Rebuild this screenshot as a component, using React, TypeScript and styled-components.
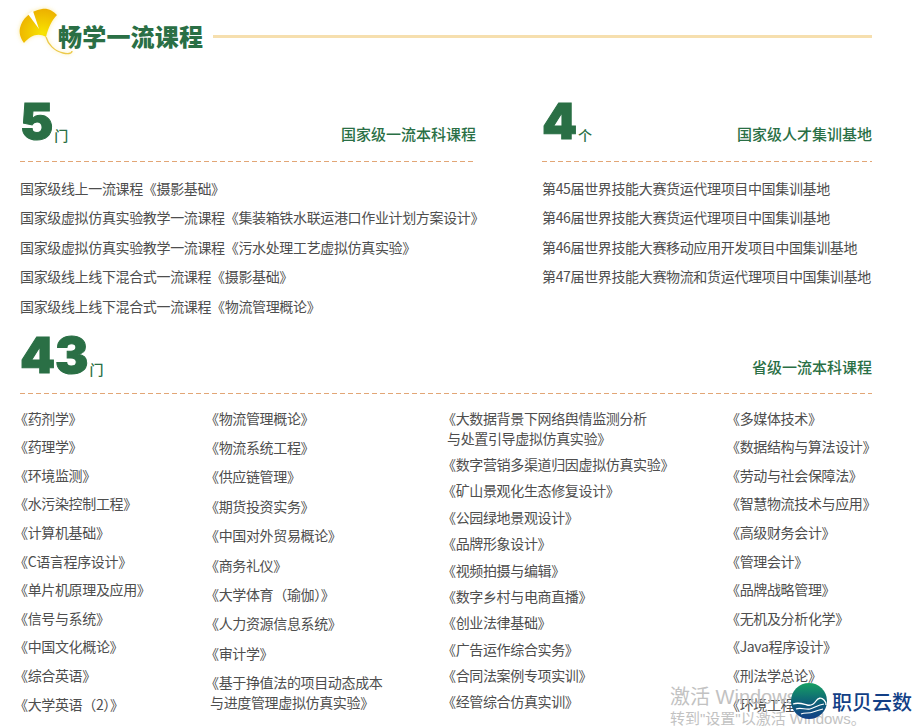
import React from "react";
import styled, { createGlobalStyle } from "styled-components";

const GlobalStyle = createGlobalStyle`
  html, body {
    margin: 0;
    background: #fff;
  }
`;

const FONT = `"Noto Sans CJK SC", "Liberation Sans", sans-serif`;
const GREEN = "#2a6f45";

const Page = styled.div`
  position: relative;
  width: 919px;
  height: 726px;
  overflow: hidden;
  padding: 12px 47px 0 20px;
  box-sizing: border-box;
  font-family: ${FONT};
  color: #4e4e4e;
`;

const Banner = styled.div`
  display: flex;
  align-items: center;
  height: 48px;
`;

const Leaf = styled.svg`
  flex: none;
  align-self: flex-start;
  width: 52px;
  height: 48px;
  margin: -4px -14px 0 0;
  overflow: visible;
  filter: drop-shadow(0 0 2px rgba(250, 225, 120, 0.7));
`;

const BannerTitle = styled.h1`
  position: relative;
  margin: 0;
  font-size: 24px;
  line-height: 48px;
  font-weight: 900;
  letter-spacing: 0.2px;
  color: ${GREEN};
  white-space: nowrap;
`;

const BannerRule = styled.div`
  flex: 1;
  height: 3px;
  margin-left: 10px;
  background: #f6dfae;
`;

const TopRow = styled.div`
  display: flex;
  justify-content: space-between;
  margin-top: 38px;
`;

const Section = styled.section<{ $width: number }>`
  width: ${(p) => p.$width}px;
`;

const SectionHead = styled.div`
  display: flex;
  justify-content: space-between;
  align-items: flex-end;
  height: 64px;
  padding-bottom: 17px;
  box-sizing: border-box;
  background: repeating-linear-gradient(90deg, #e2a676 0 5px, transparent 5px 8px) left bottom / 100% 1px no-repeat;
`;

const Count = styled.div`
  display: flex;
  align-items: flex-end;
  margin-bottom: 3px;
  color: ${GREEN};
`;

const WideHead = styled(SectionHead)`
  padding-bottom: 16px;

  ${Count} {
    margin-bottom: 2px;
  }
`;

const Digits = styled.span`
  font-family: Inter, "Liberation Sans", sans-serif;
  font-size: 50px;
  line-height: 42px;
  font-weight: 900;
  -webkit-text-stroke: 1px ${GREEN};
`;

const Unit = styled.span`
  font-size: 14px;
  line-height: 18px;
  font-weight: 500;
  margin: 0 0 -2px 1px;
`;

const SectionTitle = styled.div`
  font-size: 15px;
  line-height: 20px;
  font-weight: 500;
  color: ${GREEN};
  margin-bottom: 1px;
`;

const TopList = styled.ul`
  list-style: none;
  margin: 16px 0 0;
  padding: 0;
  display: flex;
  flex-direction: column;
  gap: 9.4px;
`;

const Item = styled.li`
  font-size: 14px;
  line-height: 20px;
  letter-spacing: -0.35px;
  white-space: nowrap;
`;

const ItemLine = styled.div<{ $indent: boolean }>`
  padding-left: ${(p) => (p.$indent ? 5 : 0)}px;
`;

const WideSection = styled.section`
  margin-top: 14px;
`;

const Columns = styled.div`
  display: grid;
  grid-template-columns: 191px 237px 284px 1fr;
  margin: 14px 0 0 -6px;
`;

const CourseList = styled.ul<{ $pitch: number }>`
  list-style: none;
  margin: 0;
  padding: 0;
  display: flex;
  flex-direction: column;
  gap: ${(p) => p.$pitch - 20}px;
`;

const Overlay = styled.div`
  position: absolute;
  left: 670px;
  top: 685px;
  font-family: "Liberation Sans", ${FONT};
  color: #c2c2c2;
  pointer-events: none;
`;

const OverlayTitle = styled.div`
  font-size: 20px;
  line-height: 24px;
`;

const OverlayNote = styled.div`
  font-size: 15px;
  line-height: 18px;
  margin-top: 1px;
  white-space: nowrap;
`;

const Brand = styled.div`
  position: absolute;
  left: 790px;
  top: 682px;
  display: flex;
  align-items: center;
`;

const BrandMark = styled.svg`
  width: 38px;
  height: 38px;
`;

const BrandName = styled.span`
  font-size: 20px;
  line-height: 24px;
  font-weight: 500;
  color: #123f86;
  margin: 2px 0 0 4px;
`;

const national = [
  "国家级线上一流课程《摄影基础》",
  "国家级虚拟仿真实验教学一流课程《集装箱铁水联运港口作业计划方案设计》",
  "国家级虚拟仿真实验教学一流课程《污水处理工艺虚拟仿真实验》",
  "国家级线上线下混合式一流课程《摄影基础》",
  "国家级线上线下混合式一流课程《物流管理概论》",
];

const bases = [
  "第45届世界技能大赛货运代理项目中国集训基地",
  "第46届世界技能大赛货运代理项目中国集训基地",
  "第46届世界技能大赛移动应用开发项目中国集训基地",
  "第47届世界技能大赛物流和货运代理项目中国集训基地",
];

const courseColumns: { pitch: number; items: string[] }[] = [
  {
    pitch: 28.6,
    items: ["《药剂学》", "《药理学》", "《环境监测》", "《水污染控制工程》", "《计算机基础》", "《C语言程序设计》", "《单片机原理及应用》", "《信号与系统》", "《中国文化概论》", "《综合英语》", "《大学英语（2）》"],
  },
  {
    pitch: 29.4,
    items: ["《物流管理概论》", "《物流系统工程》", "《供应链管理》", "《期货投资实务》", "《中国对外贸易概论》", "《商务礼仪》", "《大学体育（瑜伽）》", "《人力资源信息系统》", "《审计学》", "《基于挣值法的项目动态成本\n与进度管理虚拟仿真实验》"],
  },
  {
    pitch: 26.4,
    items: ["《大数据背景下网络舆情监测分析\n与处置引导虚拟仿真实验》", "《数字营销多渠道归因虚拟仿真实验》", "《矿山景观化生态修复设计》", "《公园绿地景观设计》", "《品牌形象设计》", "《视频拍摄与编辑》", "《数字乡村与电商直播》", "《创业法律基础》", "《广告运作综合实务》", "《合同法案例专项实训》", "《经管综合仿真实训》"],
  },
  {
    pitch: 28.6,
    items: ["《多媒体技术》", "《数据结构与算法设计》", "《劳动与社会保障法》", "《智慧物流技术与应用》", "《高级财务会计》", "《管理会计》", "《品牌战略管理》", "《无机及分析化学》", "《Java程序设计》", "《刑法学总论》", "《环境工程学》"],
  },
];

const Course = ({ text }: { text: string }) => (
  <Item>
    {text.split("\n").map((line, i) => (
      <ItemLine key={i} $indent={i > 0}>
        {line}
      </ItemLine>
    ))}
  </Item>
);

export default function App() {
  return (
    <Page>
      <GlobalStyle />
      <Banner>
        <Leaf viewBox="0 0 52 48">
          <defs>
            <radialGradient id="ginkgo" cx="0.62" cy="0.72" r="0.8">
              <stop offset="0" stopColor="#f8e400" />
              <stop offset="1" stopColor="#ebaa00" />
            </radialGradient>
          </defs>
          <path
            d="M4 35 C0 30 -1 24 0 20 C2 11 10 3 22 1 C28 0 33 3 37 7 C32 12 28 20 26 29 C18 24 10 28 4 35 Z"
            fill="url(#ginkgo)"
          />
          <path d="M8 6 L13 3 L19 21 Z" fill="#fff" />
          <path d="M26 29 C28 36 34 43 43 45 C47 46 52 46 52 43" fill="none" stroke="#ecc94a" strokeWidth="1.3" />
        </Leaf>
        <BannerTitle>畅学一流课程</BannerTitle>
        <BannerRule />
      </Banner>

      <TopRow>
        <Section $width={456}>
          <SectionHead>
            <Count>
              <Digits>5</Digits>
              <Unit>门</Unit>
            </Count>
            <SectionTitle>国家级一流本科课程</SectionTitle>
          </SectionHead>
          <TopList>
            {national.map((t) => (
              <Item key={t}>{t}</Item>
            ))}
          </TopList>
        </Section>
        <Section $width={330}>
          <SectionHead>
            <Count>
              <Digits>4</Digits>
              <Unit>个</Unit>
            </Count>
            <SectionTitle>国家级人才集训基地</SectionTitle>
          </SectionHead>
          <TopList>
            {bases.map((t) => (
              <Item key={t}>{t}</Item>
            ))}
          </TopList>
        </Section>
      </TopRow>

      <WideSection>
        <WideHead>
          <Count>
            <Digits>43</Digits>
            <Unit>门</Unit>
          </Count>
          <SectionTitle>省级一流本科课程</SectionTitle>
        </WideHead>
        <Columns>
          {courseColumns.map((col, i) => (
            <CourseList key={i} $pitch={col.pitch}>
              {col.items.map((t) => (
                <Course key={t} text={t} />
              ))}
            </CourseList>
          ))}
        </Columns>
      </WideSection>

      <Overlay>
        <OverlayTitle>激活 Windows</OverlayTitle>
        <OverlayNote>转到"设置"以激活 Windows。</OverlayNote>
      </Overlay>
      <Brand>
        <BrandMark viewBox="0 0 38 38">
          <defs>
            <linearGradient id="globe" x1="0" y1="0" x2="0" y2="1">
              <stop offset="0" stopColor="#17a063" />
              <stop offset="0.55" stopColor="#0d5f78" />
              <stop offset="1" stopColor="#123f86" />
            </linearGradient>
          </defs>
          <circle cx="19" cy="19" r="18" fill="url(#globe)" />
          <path d="M3 22 C9 20 13 22 17 23 C21 24 24 22 26 19 C28 16 31 15 34 18 C35 19 36 21 36 23" fill="none" stroke="#fff" strokeWidth="1.3" />
          <path d="M6 27 C11 25 15 28 20 27 C24 26 28 23 34 22" fill="none" stroke="#fff" strokeWidth="1.2" />
          <path d="M11 32 C15 30 19 32 23 30 C26 29 29 28 33 27" fill="none" stroke="#fff" strokeWidth="1.1" />
        </BrandMark>
        <BrandName>职贝云数</BrandName>
      </Brand>
    </Page>
  );
}
